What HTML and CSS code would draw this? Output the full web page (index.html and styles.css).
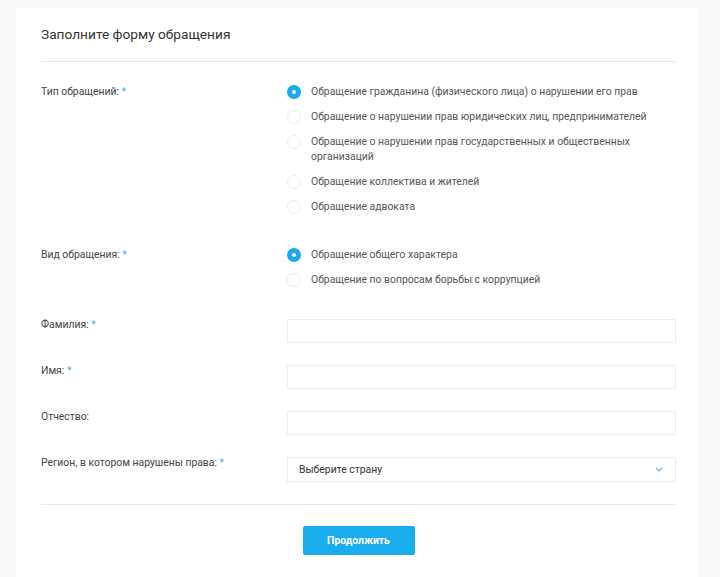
FILE: index.html
```html
<!DOCTYPE html>
<html lang="ru">
<head>
  <meta charset="UTF-8">
  <meta name="viewport" content="width=device-width, initial-scale=1.0">
  <title>Заполните форму обращения</title>
  <link rel="stylesheet" href="styles.css">
</head>
<body>

  <div class="card">
    <div class="card-header">
      <h1>Заполните форму обращения</h1>
    </div>

    <form class="form">
      <!-- Тип обращения -->
      <div class="row row-first">
        <div class="row-label">Тип обращений: <span class="req">*</span></div>
        <div class="row-control options">
          <label class="option"><span class="radio checked"></span><span>Обращение гражданина (физического лица) о нарушении его прав</span></label>
          <label class="option"><span class="radio"></span><span>Обращение о нарушении прав юридических лиц, предпринимателей</span></label>
          <label class="option"><span class="radio"></span><span class="option-text">Обращение о нарушении прав государственных и общественных организаций</span></label>
          <label class="option"><span class="radio"></span><span>Обращение коллектива и жителей</span></label>
          <label class="option"><span class="radio"></span><span>Обращение адвоката</span></label>
        </div>
      </div>

      <!-- Вид обращения -->
      <div class="row row-section">
        <div class="row-label">Вид обращения: <span class="req">*</span></div>
        <div class="row-control options">
          <label class="option"><span class="radio checked"></span><span>Обращение общего характера</span></label>
          <label class="option"><span class="radio"></span><span>Обращение по вопросам борьбы с коррупцией</span></label>
        </div>
      </div>

      <div class="row row-section row-field">
        <div class="row-label">Фамилия: <span class="req">*</span></div>
        <div class="row-control"><input type="text" class="field"></div>
      </div>

      <div class="row row-field">
        <div class="row-label">Имя: <span class="req">*</span></div>
        <div class="row-control"><input type="text" class="field"></div>
      </div>

      <div class="row row-field">
        <div class="row-label">Отчество:</div>
        <div class="row-control"><input type="text" class="field"></div>
      </div>

      <div class="row row-field">
        <div class="row-label">Регион, в котором нарушены права: <span class="req">*</span></div>
        <div class="row-control">
          <div class="select">
            <span>Выберите страну</span>
            <svg class="chevron" width="8" height="5" viewBox="0 0 8 5"><path d="M1 1l3 3 3-3" fill="none" stroke="#7fc3dc" stroke-width="1.6"/></svg>
          </div>
        </div>
      </div>

      <div class="form-footer">
        <button type="button" class="btn">Продолжить</button>
      </div>
    </form>
  </div>

</body>
</html>
```

FILE: styles.css
```css
body {
  font-family: Roboto, "Liberation Sans", Arial, sans-serif;
  background: #fafafa;
  margin: 0;
  padding: 8px 0 0 16px;
  color: #444;
}
.card {
  width: 681px;
  box-sizing: border-box;
  background: #fff;
  padding: 0 21px 21px 25px;
  min-height: 569px;
}
.card-header {
  padding: 16px 0 17px;
  border-bottom: 1px solid #e8e8e8;
}
h1 {
  margin: 0;
  font-size: 13.7px;
  line-height: 20px;
  font-weight: 400;
  color: #333;
}
.form {
  font-size: 10.4px;
  line-height: 15px;
}
.row {
  display: flex;
}
.row-first {
  margin-top: 22px;
}
.row-section {
  margin-top: 33px;
}
.row-field {
  margin-top: 22px;
}
.row-section.row-field {
  margin-top: 32px;
}
.row-label {
  width: 246px;
  flex-shrink: 0;
  color: #444;
}
.row-field .row-label {
  margin-top: -2px;
}
.req {
  color: #4ab3e6;
}
.row-control {
  flex: 1;
}
.options {
  display: flex;
  flex-direction: column;
  gap: 10px;
}
.option {
  display: flex;
  align-items: flex-start;
  color: #555;
  cursor: pointer;
}
.option-text {
  max-width: 330px;
}
.radio {
  width: 14px;
  height: 14px;
  box-sizing: border-box;
  border: 1px solid #ececec;
  border-radius: 50%;
  margin: 0.5px 10px 0 0;
  flex-shrink: 0;
  background: #fff;
}
.radio.checked {
  border: 5px solid #1aa9ea;
}
.field {
  display: block;
  width: 100%;
  height: 24px;
  box-sizing: border-box;
  border: 1px solid #ececec;
  border-radius: 1px;
  background: #fff;
  font: inherit;
  padding: 0 10px;
}
.select {
  height: 25px;
  box-sizing: border-box;
  border: 1px solid #ececec;
  display: flex;
  align-items: center;
  justify-content: space-between;
  padding: 0 12px 0 11px;
  color: #333;
}
.chevron {
  display: block;
}
.form-footer {
  margin-top: 22px;
  border-top: 1px solid #e8e8e8;
  padding-top: 21px;
  text-align: center;
}
.btn {
  width: 112px;
  height: 29px;
  background: #1aadee;
  color: #fff;
  border: none;
  border-radius: 2px;
  font: 700 10.4px Roboto, "Liberation Sans", Arial, sans-serif;
  cursor: pointer;
}
.btn:hover {
  background: #139ddb;
}
```
